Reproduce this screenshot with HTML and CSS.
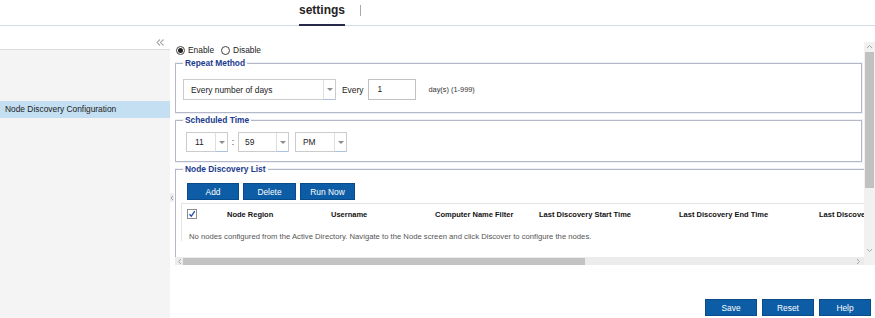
FILE: index.html
```html
<!DOCTYPE html>
<html lang="en">
  <head>
    <meta charset="UTF-8" />
    <title>Settings - Node Discovery Configuration</title>
    <link rel="stylesheet" href="styles.css">
  </head>
  <body>
    <header class="topbar">
      <span class="tab active">settings</span>
      <span class="tab-sep"></span>
    </header>

    <div class="workspace">
      <aside class="sidebar">
        <div class="sidebar-tools">
          <svg class="collapse" width="8" height="7" viewBox="0 0 8 7">
            <path d="M4 0.5 L1 3.5 L4 6.5 M7.5 0.5 L4.5 3.5 L7.5 6.5" fill="none" stroke="#a9a9a9" stroke-width="1.1" />
          </svg>
        </div>
        <ul class="tree">
          <li class="tree-item selected">Node Discovery Configuration</li>
        </ul>
      </aside>

      <div class="splitter">
        <span class="splitter-handle">
          <svg width="4" height="6" viewBox="0 0 4 6"><path d="M3 1 L1 3 L3 5" fill="none" stroke="#9a9a9a" stroke-width="0.9" /></svg>
        </span>
      </div>

      <main class="main">
        <div class="scroller">
          <div class="viewport">
            <div class="radio-row">
              <label class="radio"><span class="radio-dot checked"></span>Enable</label>
              <label class="radio"><span class="radio-dot"></span>Disable</label>
            </div>

            <fieldset class="group group-repeat">
              <legend>Repeat Method</legend>
              <div class="row">
                <div class="select select-method">
                  <span class="select-value">Every number of days</span>
                  <span class="select-arrow"></span>
                </div>
                <span class="every-label">Every</span>
                <div class="text-input">1</div>
                <span class="hint">day(s) (1-999)</span>
              </div>
            </fieldset>

            <fieldset class="group group-time">
              <legend>Scheduled Time</legend>
              <div class="row time-row">
                <div class="select select-hour">
                  <span class="select-value">11</span>
                  <span class="select-arrow"></span>
                </div>
                <span class="colon">:</span>
                <div class="select select-minute">
                  <span class="select-value">59</span>
                  <span class="select-arrow"></span>
                </div>
                <div class="select select-ampm">
                  <span class="select-value">PM</span>
                  <span class="select-arrow"></span>
                </div>
              </div>
            </fieldset>

            <fieldset class="group group-list">
              <legend>Node Discovery List</legend>
              <div class="toolbar">
                <button class="btn btn-add">Add</button>
                <button class="btn btn-delete">Delete</button>
                <button class="btn btn-run">Run Now</button>
              </div>
              <div class="grid">
                <div class="grid-head">
                  <span class="cell cell-check">
                    <span class="checkbox">
                      <svg width="8" height="8" viewBox="0 0 8 8"><path d="M1.5 4.2 L3.3 6.2 L6.8 1.2" fill="none" stroke="#2150a8" stroke-width="1.3" /></svg>
                    </span>
                  </span>
                  <span class="cell col-region">Node Region</span>
                  <span class="cell col-user">Username</span>
                  <span class="cell col-filter">Computer Name Filter</span>
                  <span class="cell col-start">Last Discovery Start Time</span>
                  <span class="cell col-end">Last Discovery End Time</span>
                  <span class="cell col-status">Last Discovery Status</span>
                </div>
                <div class="grid-empty">No nodes configured from the Active Directory. Navigate to the Node screen and click Discover to configure the nodes.</div>
              </div>
            </fieldset>
          </div>

          <div class="vbar">
            <svg class="bar-arrow" width="7" height="5" viewBox="0 0 7 5"><path d="M1 4 L3.5 1.5 L6 4" fill="none" stroke="#a0a0a0" stroke-width="0.9" /></svg>
            <span class="vbar-thumb"></span>
            <svg class="bar-arrow bar-arrow-down" width="7" height="5" viewBox="0 0 7 5"><path d="M1 1 L3.5 3.5 L6 1" fill="none" stroke="#a0a0a0" stroke-width="0.9" /></svg>
          </div>

          <div class="hbar">
            <svg class="bar-arrow" width="5" height="7" viewBox="0 0 5 7"><path d="M4 1 L1.5 3.5 L4 6" fill="none" stroke="#a0a0a0" stroke-width="0.9" /></svg>
            <span class="hbar-thumb"></span>
            <svg class="bar-arrow bar-arrow-right" width="5" height="7" viewBox="0 0 5 7"><path d="M1 1 L3.5 3.5 L1 6" fill="none" stroke="#a0a0a0" stroke-width="0.9" /></svg>
          </div>

          <div class="corner"></div>
        </div>

        <div class="actions">
          <button class="btn">Save</button>
          <button class="btn">Reset</button>
          <button class="btn">Help</button>
        </div>
      </main>
    </div>
  </body>
</html>
```

FILE: styles.css
```css
* {
  box-sizing: border-box;
}
body {
  margin: 0;
  width: 875px;
  height: 318px;
  overflow: hidden;
  display: flex;
  flex-direction: column;
  background: #fff;
  color: #222;
  font-family: "Liberation Sans", Arial, sans-serif;
  font-size: 8.4px;
}

/* top tabs */
.topbar {
  height: 26px;
  flex: none;
  display: flex;
  align-items: flex-start;
  padding-left: 299px;
  border-bottom: 1px solid #d3dbe4;
}
.tab {
  height: 26px;
  padding-top: 3px;
  font-size: 12px;
  line-height: 14px;
  font-weight: bold;
  color: #242424;
}
.tab.active {
  border-bottom: 2px solid #272a48;
}
.tab-sep {
  width: 1px;
  height: 11px;
  margin: 5px 0 0 15px;
  background: #a8a8a8;
}

.workspace {
  flex: 1;
  display: flex;
  min-height: 0;
}

/* left tree */
.sidebar {
  width: 170px;
  flex: none;
  display: flex;
  flex-direction: column;
}
.sidebar-tools {
  height: 23px;
  display: flex;
  justify-content: flex-end;
  align-items: flex-end;
  padding: 0 6px 3px 0;
}
.tree {
  flex: 1;
  margin: 0;
  padding: 51px 0 0;
  list-style: none;
  background: #f4f4f4;
  border-top: 1px solid #dcdcdc;
}
.tree-item {
  height: 17px;
  line-height: 17px;
  padding-left: 5px;
}
.tree-item.selected {
  background: #c3dff1;
}

.splitter {
  width: 5px;
  flex: none;
  padding-top: 167px;
}
.splitter-handle {
  display: flex;
  align-items: center;
  justify-content: center;
  width: 4px;
  height: 9px;
  background: #ececec;
  border-radius: 0 2px 2px 0;
}

/* main area */
.main {
  flex: 1;
  display: flex;
  flex-direction: column;
  padding-top: 16px;
}
.scroller {
  display: grid;
  grid-template-columns: 689px 11px;
  grid-template-rows: 215px 8px;
}
.viewport {
  overflow: hidden;
}

.radio-row {
  height: 16px;
  display: flex;
  align-items: center;
  gap: 7px;
  padding-left: 1px;
}
.radio {
  display: flex;
  align-items: center;
  gap: 3px;
}
.radio-dot {
  width: 9px;
  height: 9px;
  border: 1px solid #444;
  border-radius: 50%;
  display: flex;
  align-items: center;
  justify-content: center;
}
.radio-dot.checked::after {
  content: "";
  width: 5px;
  height: 5px;
  border-radius: 50%;
  background: #222;
}

.group {
  width: 687px;
  margin: 0;
  padding: 11px 7px 12px;
  border: 1px solid #b3b7c8;
  box-shadow: 0 0 0 1px #eef0f5;
}
.group legend {
  padding: 0 2px;
  font-size: 8.4px;
  line-height: 10px;
  font-weight: bold;
  color: #1c3c8e;
}
.group-time {
  margin-top: 2px;
  padding: 7px 7px 9px;
}
.group-list {
  width: 1150px;
  min-height: 130px;
  margin-top: 2px;
  padding: 9px 7px 0;
}

.row {
  display: flex;
  align-items: center;
}
.time-row {
  padding-left: 3px;
}

.select {
  height: 21px;
  display: flex;
  border: 1px solid #cbcbcb;
  background: #fff;
}
.select-value {
  flex: 1;
  display: flex;
  align-items: center;
}
.select-arrow {
  width: 12px;
  display: flex;
  align-items: center;
  justify-content: center;
  border-left: 1px solid #dedede;
  border-bottom: 1px solid #a9c3de;
  margin-bottom: -1px;
}
.select-arrow::after {
  content: "";
  border-left: 3px solid transparent;
  border-right: 3px solid transparent;
  border-top: 3px solid #8c8c8c;
}
.select-method {
  width: 153px;
}
.select-method .select-value {
  padding-left: 7px;
}
.select-hour {
  width: 42px;
  height: 20px;
}
.select-hour .select-value {
  padding-left: 8px;
}
.select-minute {
  width: 51px;
  height: 20px;
}
.select-minute .select-value {
  padding-left: 6px;
}
.select-ampm {
  width: 52px;
  height: 20px;
  margin-left: 6px;
}
.select-ampm .select-value {
  padding-left: 7px;
}
.colon {
  width: 10px;
  text-align: center;
}
.every-label {
  margin-left: 6px;
}
.text-input {
  width: 48px;
  height: 21px;
  margin-left: 5px;
  padding-left: 8px;
  line-height: 19px;
  border: 1px solid #c2c2c2;
}
.hint {
  margin-left: 12px;
  font-size: 7.4px;
  color: #333;
}

/* buttons */
.btn {
  height: 17px;
  padding: 0;
  border: 1px solid #0a4c8a;
  background: #0c5da6;
  color: #fff;
  font-family: "Liberation Sans", Arial, sans-serif;
  font-size: 8.4px;
  cursor: pointer;
}
.toolbar {
  display: flex;
  gap: 4px;
  padding-left: 4px;
}
.btn-add {
  width: 52px;
}
.btn-delete {
  width: 53px;
}
.btn-run {
  width: 55px;
}

/* list grid */
.grid {
  margin: 3px 0 0 -2px;
  border-top: 1px solid #e4e4e4;
  border-left: 1px solid #e4e4e4;
}
.grid-head {
  height: 20px;
  display: flex;
  align-items: center;
  font-size: 7.5px;
  font-weight: bold;
  color: #111;
}
.cell {
  flex: none;
}
.cell-check {
  width: 45px;
  padding-left: 5px;
  display: flex;
}
.checkbox {
  width: 10px;
  height: 10px;
  border: 1px solid #8d8d8d;
  display: flex;
  align-items: center;
  justify-content: center;
}
.col-region,
.col-user,
.col-filter {
  width: 104px;
}
.col-start,
.col-end,
.col-status {
  width: 140px;
}
.grid-empty {
  padding: 8px 0 0 7px;
  font-size: 7.7px;
  color: #555;
}

/* fake scrollbars */
.vbar {
  display: flex;
  flex-direction: column;
  align-items: center;
  background: #f1f1f1;
  padding-top: 2px;
}
.vbar-thumb {
  width: 9px;
  height: 136px;
  margin-top: 3px;
  background: #c1c1c1;
}
.bar-arrow-down {
  margin-top: auto;
  margin-bottom: 4px;
}
.hbar {
  display: flex;
  align-items: center;
  background: #ececec;
  padding-left: 2px;
}
.hbar-thumb {
  width: 402px;
  height: 7px;
  margin-left: 1px;
  background: #c3c3c3;
}
.bar-arrow-right {
  margin-left: auto;
  margin-right: 3px;
}
.corner {
  background: #f1f1f1;
}

.actions {
  display: flex;
  justify-content: flex-end;
  gap: 5px;
  padding: 34px 4px 0 0;
}
.actions .btn {
  width: 52px;
}
```
